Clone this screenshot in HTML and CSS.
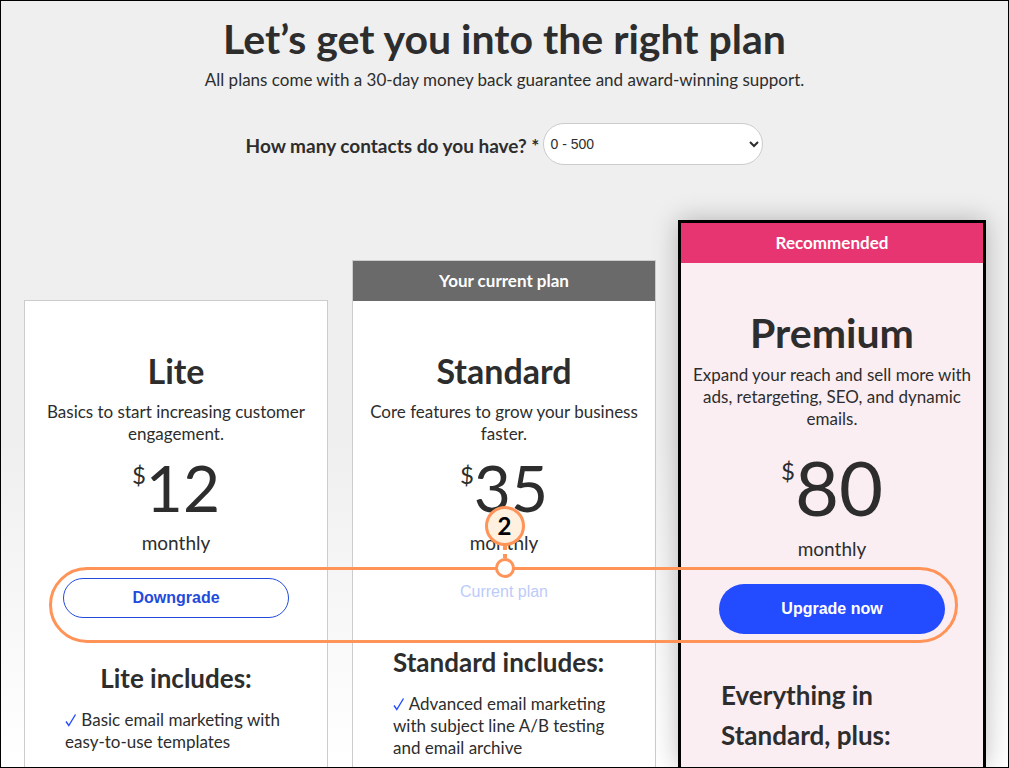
FILE: index.html
```
<!DOCTYPE html>
<html lang="en">
<head>
    <meta charset="UTF-8" />
    <meta name="viewport" content="width=device-width, initial-scale=1.0"/>
    <title>Choose your plan</title>
    <link rel="stylesheet" href="styles.css">
</head>
<body>
    <main class="page">
        <header class="intro">
            <h1>Let’s get you into the right plan</h1>
            <p>All plans come with a 30-day money back guarantee and award-winning support.</p>
            <div class="contacts">
                <label for="contacts">How many contacts do you have? *</label>
                <select id="contacts" required>
                    <option>0 - 500</option>
                    <option>501 - 2,500</option>
                    <option>2,501 - 5,000</option>
                </select>
            </div>
        </header>

        <div class="plans">
            <section class="plan lite">
                <div class="plan-body">
                    <h2>Lite</h2>
                    <p class="desc">Basics to start increasing customer engagement.</p>
                    <p class="price"><sup>$</sup>12</p>
                    <p class="period">monthly</p>
                    <button class="btn btn-outline" type="button">Downgrade</button>
                    <div class="features">
                        <h3>Lite includes:</h3>
                        <ul>
                            <li><svg class="check" viewBox="0 0 12 14"><path d="M1 8.5L3.8 12.5L10.5 1.5" /></svg> Basic email marketing with easy-to-use templates</li>
                        </ul>
                    </div>
                </div>
            </section>

            <section class="plan standard">
                <div class="banner">Your current plan</div>
                <div class="plan-body">
                    <h2>Standard</h2>
                    <p class="desc">Core features to grow your business faster.</p>
                    <p class="price"><sup>$</sup>35</p>
                    <p class="period">monthly</p>
                    <button class="btn btn-current" type="button" disabled>Current plan</button>
                    <div class="features">
                        <h3>Standard includes:</h3>
                        <ul>
                            <li><svg class="check" viewBox="0 0 12 14"><path d="M1 8.5L3.8 12.5L10.5 1.5" /></svg> Advanced email marketing with subject line A/B testing and email archive</li>
                        </ul>
                    </div>
                </div>
            </section>

            <section class="plan premium">
                <div class="banner">Recommended</div>
                <div class="plan-body">
                    <h2>Premium</h2>
                    <p class="desc">Expand your reach and sell more with ads, retargeting, SEO, and dynamic emails.</p>
                    <p class="price"><sup>$</sup>80</p>
                    <p class="period">monthly</p>
                    <button class="btn btn-primary" type="button">Upgrade now</button>
                    <div class="features">
                        <h3>Everything in Standard, plus:</h3>
                    </div>
                </div>
            </section>

            <!-- step 2 callout over the plan buttons -->
            <div class="highlight"></div>
            <div class="step">
                <span class="step-number">2</span>
                <span class="step-line"></span>
                <span class="step-dot"></span>
            </div>
        </div>
    </main>
</body>
</html>
```
FILE: styles.css
```
* {
    box-sizing: border-box;
}
body {
    margin: 0;
    font-family: Lato, sans-serif;
    font-size: 17px;
    line-height: 22px;
    color: #2d2d2d;
}
h1, h2, h3, p, ul {
    margin: 0;
    padding: 0;
}
.page {
    display: flex;
    flex-direction: column;
    height: 100vh;
    overflow: hidden;
    border: 1px solid #000;
    background: linear-gradient(#efefef 58%, #fff);
}
.intro {
    padding-top: 13px;
    text-align: center;
}
h1 {
    font-size: 41px;
    line-height: 50px;
}
.intro p {
    margin-top: 5px;
}
.contacts {
    display: flex;
    justify-content: center;
    align-items: center;
    gap: 4px;
    margin-top: 32px;
}
.contacts label {
    padding-top: 4px;
    font-size: 19px;
    font-weight: bold;
}
select {
    width: 220px;
    height: 42px;
    padding: 0 2px;
    border: 1px solid #ccc;
    border-radius: 21px;
    background: #fff;
    color: #2d2d2d;
    font-family: "Liberation Sans", sans-serif;
    font-size: 14px;
}
.plans {
    position: relative;
    display: grid;
    grid-template-columns: repeat(3, 1fr);
    gap: 24px;
    flex: 1;
    margin-top: 55px;
    padding: 0 24px 0 23px;
}
.plan {
    border: 1px solid #ccc;
    border-bottom: none;
    background: #fff;
    text-align: center;
}
.lite {
    margin-top: 80px;
}
.standard {
    margin-top: 40px;
}
.premium {
    margin: 0 -2px;
    border: 3px solid #000;
    border-bottom: none;
    background: #fbeef3;
    box-shadow: 0 0 24px rgba(0,0,0,0.25);
}
.banner {
    background: #6a6a6a;
    color: #fff;
    font-size: 17px;
    font-weight: bold;
    line-height: 40px;
}
.premium .banner {
    background: #e73572;
}
.plan-body {
    padding: 50px 10px 0;
}
h2 {
    font-size: 34px;
    line-height: 40px;
}
.desc {
    margin-top: 10px;
}
.price {
    font-size: 64px;
    line-height: 86px;
}
.price sup {
    display: inline-block;
    font-size: 24px;
    line-height: 24px;
    vertical-align: 28px;
}
.period {
    font-size: 19px;
    line-height: 24px;
}
.btn {
    display: block;
    width: 226px;
    margin: 23px auto 0;
    padding: 0;
    border-radius: 25px;
    font-family: "Liberation Sans", sans-serif;
    font-size: 16px;
    font-weight: bold;
    cursor: pointer;
}
.btn-outline {
    height: 40px;
    border: 1px solid #234bdb;
    background: #fff;
    color: #234bdb;
}
.btn-current {
    height: 28px;
    border: none;
    background: none;
    color: #bccbfa;
    font-weight: normal;
    cursor: default;
}
.btn-primary {
    height: 50px;
    border: none;
    background: #234bff;
    color: #fff;
}
.features {
    margin-top: 40px;
    padding: 0 30px;
}
h3 {
    font-size: 26px;
    line-height: 40px;
}
.features ul {
    margin-top: 11px;
    list-style: none;
    text-align: left;
}
.check {
    width: 12px;
    height: 14px;
    vertical-align: -1px;
    fill: none;
    stroke: #234bff;
    stroke-width: 1.4;
}
.standard .features {
    margin-top: 36px;
}
.standard h3, .premium h3 {
    text-align: left;
}
.premium .plan-body {
    padding-top: 45px;
}
.premium h2 {
    font-size: 41px;
    line-height: 50px;
}
.premium .desc {
    margin-top: 6px;
}
.premium .price {
    margin-top: 7px;
    font-size: 76px;
    line-height: 100px;
}
.premium .price sup {
    vertical-align: 36px;
}
.premium .features {
    margin-top: 41px;
}
.highlight {
    position: absolute;
    top: 347px;
    left: 48px;
    right: 50px;
    height: 76px;
    border: 3px solid #ff9358;
    border-radius: 38px;
    pointer-events: none;
}
.step {
    position: absolute;
    top: 286px;
    left: 50%;
    display: flex;
    flex-direction: column;
    align-items: center;
    transform: translateX(-50%);
}
.step-number {
    width: 40px;
    height: 40px;
    border: 3px solid #ff9358;
    border-radius: 50%;
    background: #fff0df;
    color: #000;
    font-size: 24px;
    font-weight: bold;
    line-height: 34px;
    text-align: center;
}
.step-line {
    width: 4px;
    height: 12px;
    background: linear-gradient(#ff9358 4px, transparent 4px, transparent 8px, #ff9358 8px);
}
.step-dot {
    width: 20px;
    height: 20px;
    border: 3px solid #ff9358;
    border-radius: 50%;
    background: #fff;
}
```
